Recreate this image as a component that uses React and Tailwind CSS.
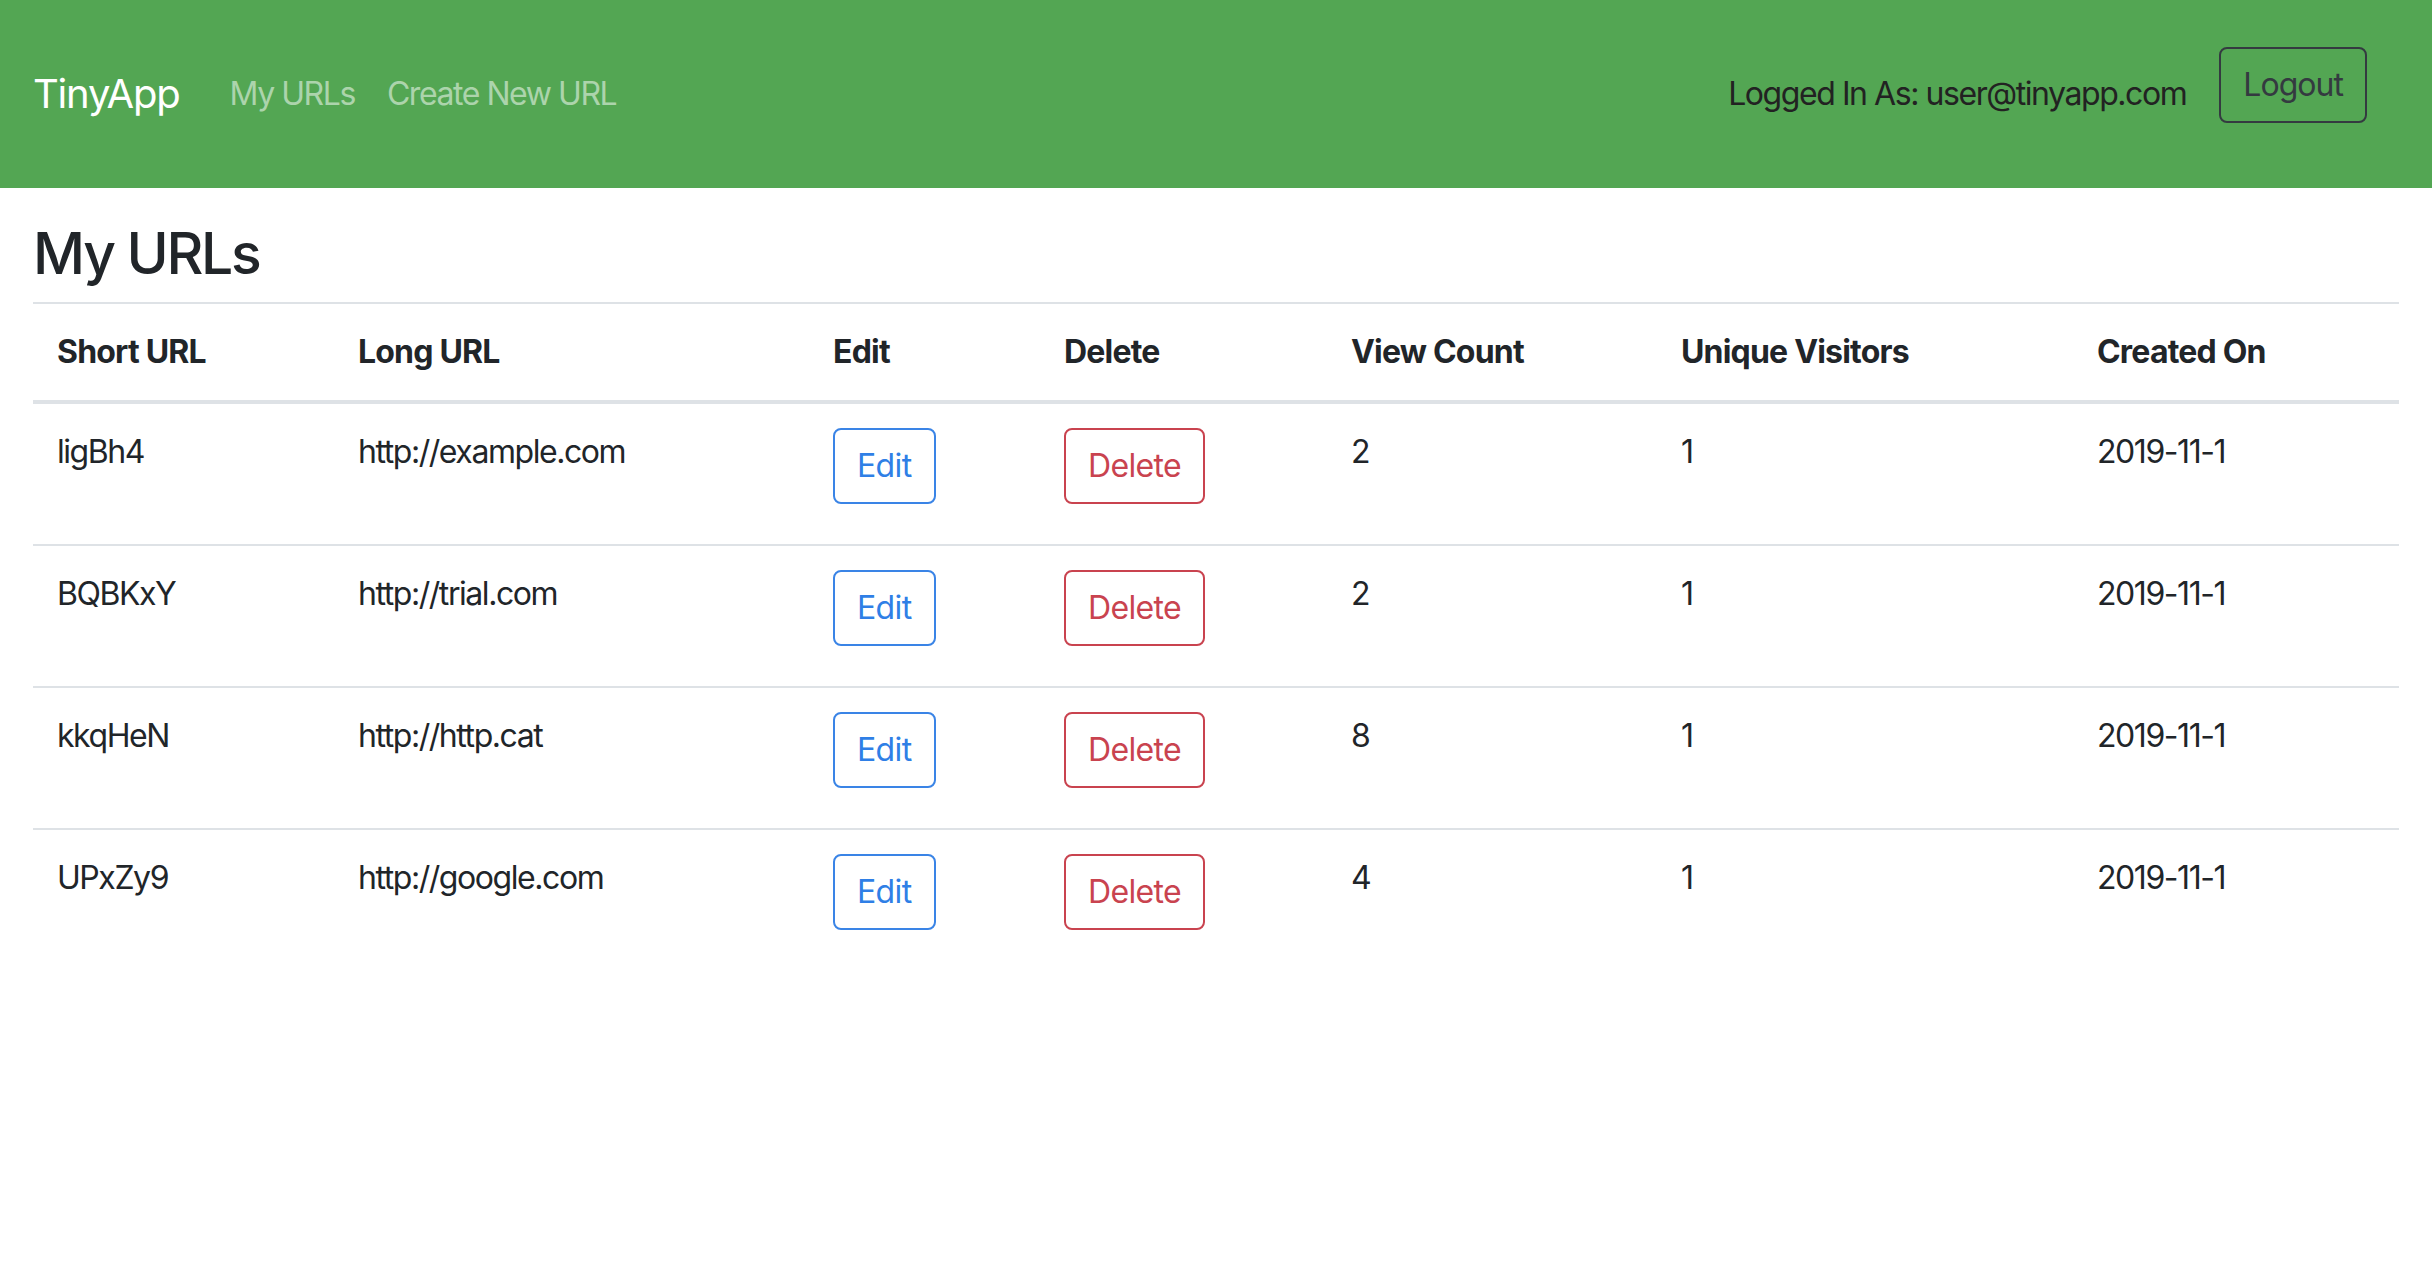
import React from "react";

const urls = [
  { short: "ligBh4", long: "http://example.com", views: 2, unique: 1, created: "2019-11-1" },
  { short: "BQBKxY", long: "http://trial.com", views: 2, unique: 1, created: "2019-11-1" },
  { short: "kkqHeN", long: "http://http.cat", views: 8, unique: 1, created: "2019-11-1" },
  { short: "UPxZy9", long: "http://google.com", views: 4, unique: 1, created: "2019-11-1" },
];

function Navbar() {
  return (
    <nav className="h-[188px] bg-[#53a653] flex items-center justify-between pl-[33px] pr-[65px]">
      <div className="flex items-center">
        <a href="#" className="text-white text-[40px] leading-[60px] tracking-[-0.03em] mr-[34px]">TinyApp</a>
        <a href="#" className="text-[#acd4ac] text-[32px] leading-[48px] tracking-[-0.045em] px-[16px]">My URLs</a>
        <a href="#" className="text-[#acd4ac] text-[32px] leading-[48px] tracking-[-0.045em] px-[16px]">Create New URL</a>
      </div>
      <div className="flex items-center">
        <span className="text-[#222] text-[32px] leading-[48px] tracking-[-0.045em] mr-[33px]">Logged In As: user@tinyapp.com</span>
        <button className="h-[76px] px-[22px] mb-[19px] border-2 border-[#343a40] rounded-[8px] text-[#343a40] text-[32px] leading-[48px] tracking-[-0.03em]">
          Logout
        </button>
      </div>
    </nav>
  );
}

function App() {
  const th = "text-left font-bold tracking-[-0.025em] px-[24px] py-[24px] leading-[48px] border-t-2 border-b-4 border-[#dee2e6]";
  const td = "align-top px-[24px] pt-[24px] pb-[24px] leading-[48px] tracking-[-0.045em] border-t-2 border-[#dee2e6]";

  return (
    <div className="min-h-screen bg-white text-[#212529] font-['Inter',_'Liberation_Sans',_sans-serif]">
      <Navbar />
      <main className="px-[33px] pt-[32px]">
        <h1 className="text-[57px] leading-[68px] font-medium tracking-[-0.04em] mb-[14px]">My URLs</h1>
        <table className="w-full table-fixed border-collapse text-[32px]">
          <colgroup>
            <col className="w-[301px]" />
            <col className="w-[475px]" />
            <col className="w-[231px]" />
            <col className="w-[287px]" />
            <col className="w-[330px]" />
            <col className="w-[416px]" />
            <col />
          </colgroup>
          <thead>
            <tr>
              <th className={th}>Short URL</th>
              <th className={th}>Long URL</th>
              <th className={th}>Edit</th>
              <th className={th}>Delete</th>
              <th className={th}>View Count</th>
              <th className={th}>Unique Visitors</th>
              <th className={th}>Created On</th>
            </tr>
          </thead>
          <tbody>
            {urls.map((u) => (
              <tr key={u.short}>
                <td className={td}>{u.short}</td>
                <td className={td}>{u.long}</td>
                <td className={td}>
                  <button className="h-[76px] px-[22px] mb-[16px] border-2 border-[#3a84e6] rounded-[8px] text-[#2f7fe6] text-[32px] leading-[48px] tracking-[-0.02em]">
                    Edit
                  </button>
                </td>
                <td className={td}>
                  <button className="h-[76px] px-[22px] mb-[16px] border-2 border-[#c9434f] rounded-[8px] text-[#c9434f] text-[32px] leading-[48px] tracking-[-0.02em]">
                    Delete
                  </button>
                </td>
                <td className={td}>{u.views}</td>
                <td className={td}>{u.unique}</td>
                <td className={td}>{u.created}</td>
              </tr>
            ))}
          </tbody>
        </table>
      </main>
    </div>
  );
}

export default App;
